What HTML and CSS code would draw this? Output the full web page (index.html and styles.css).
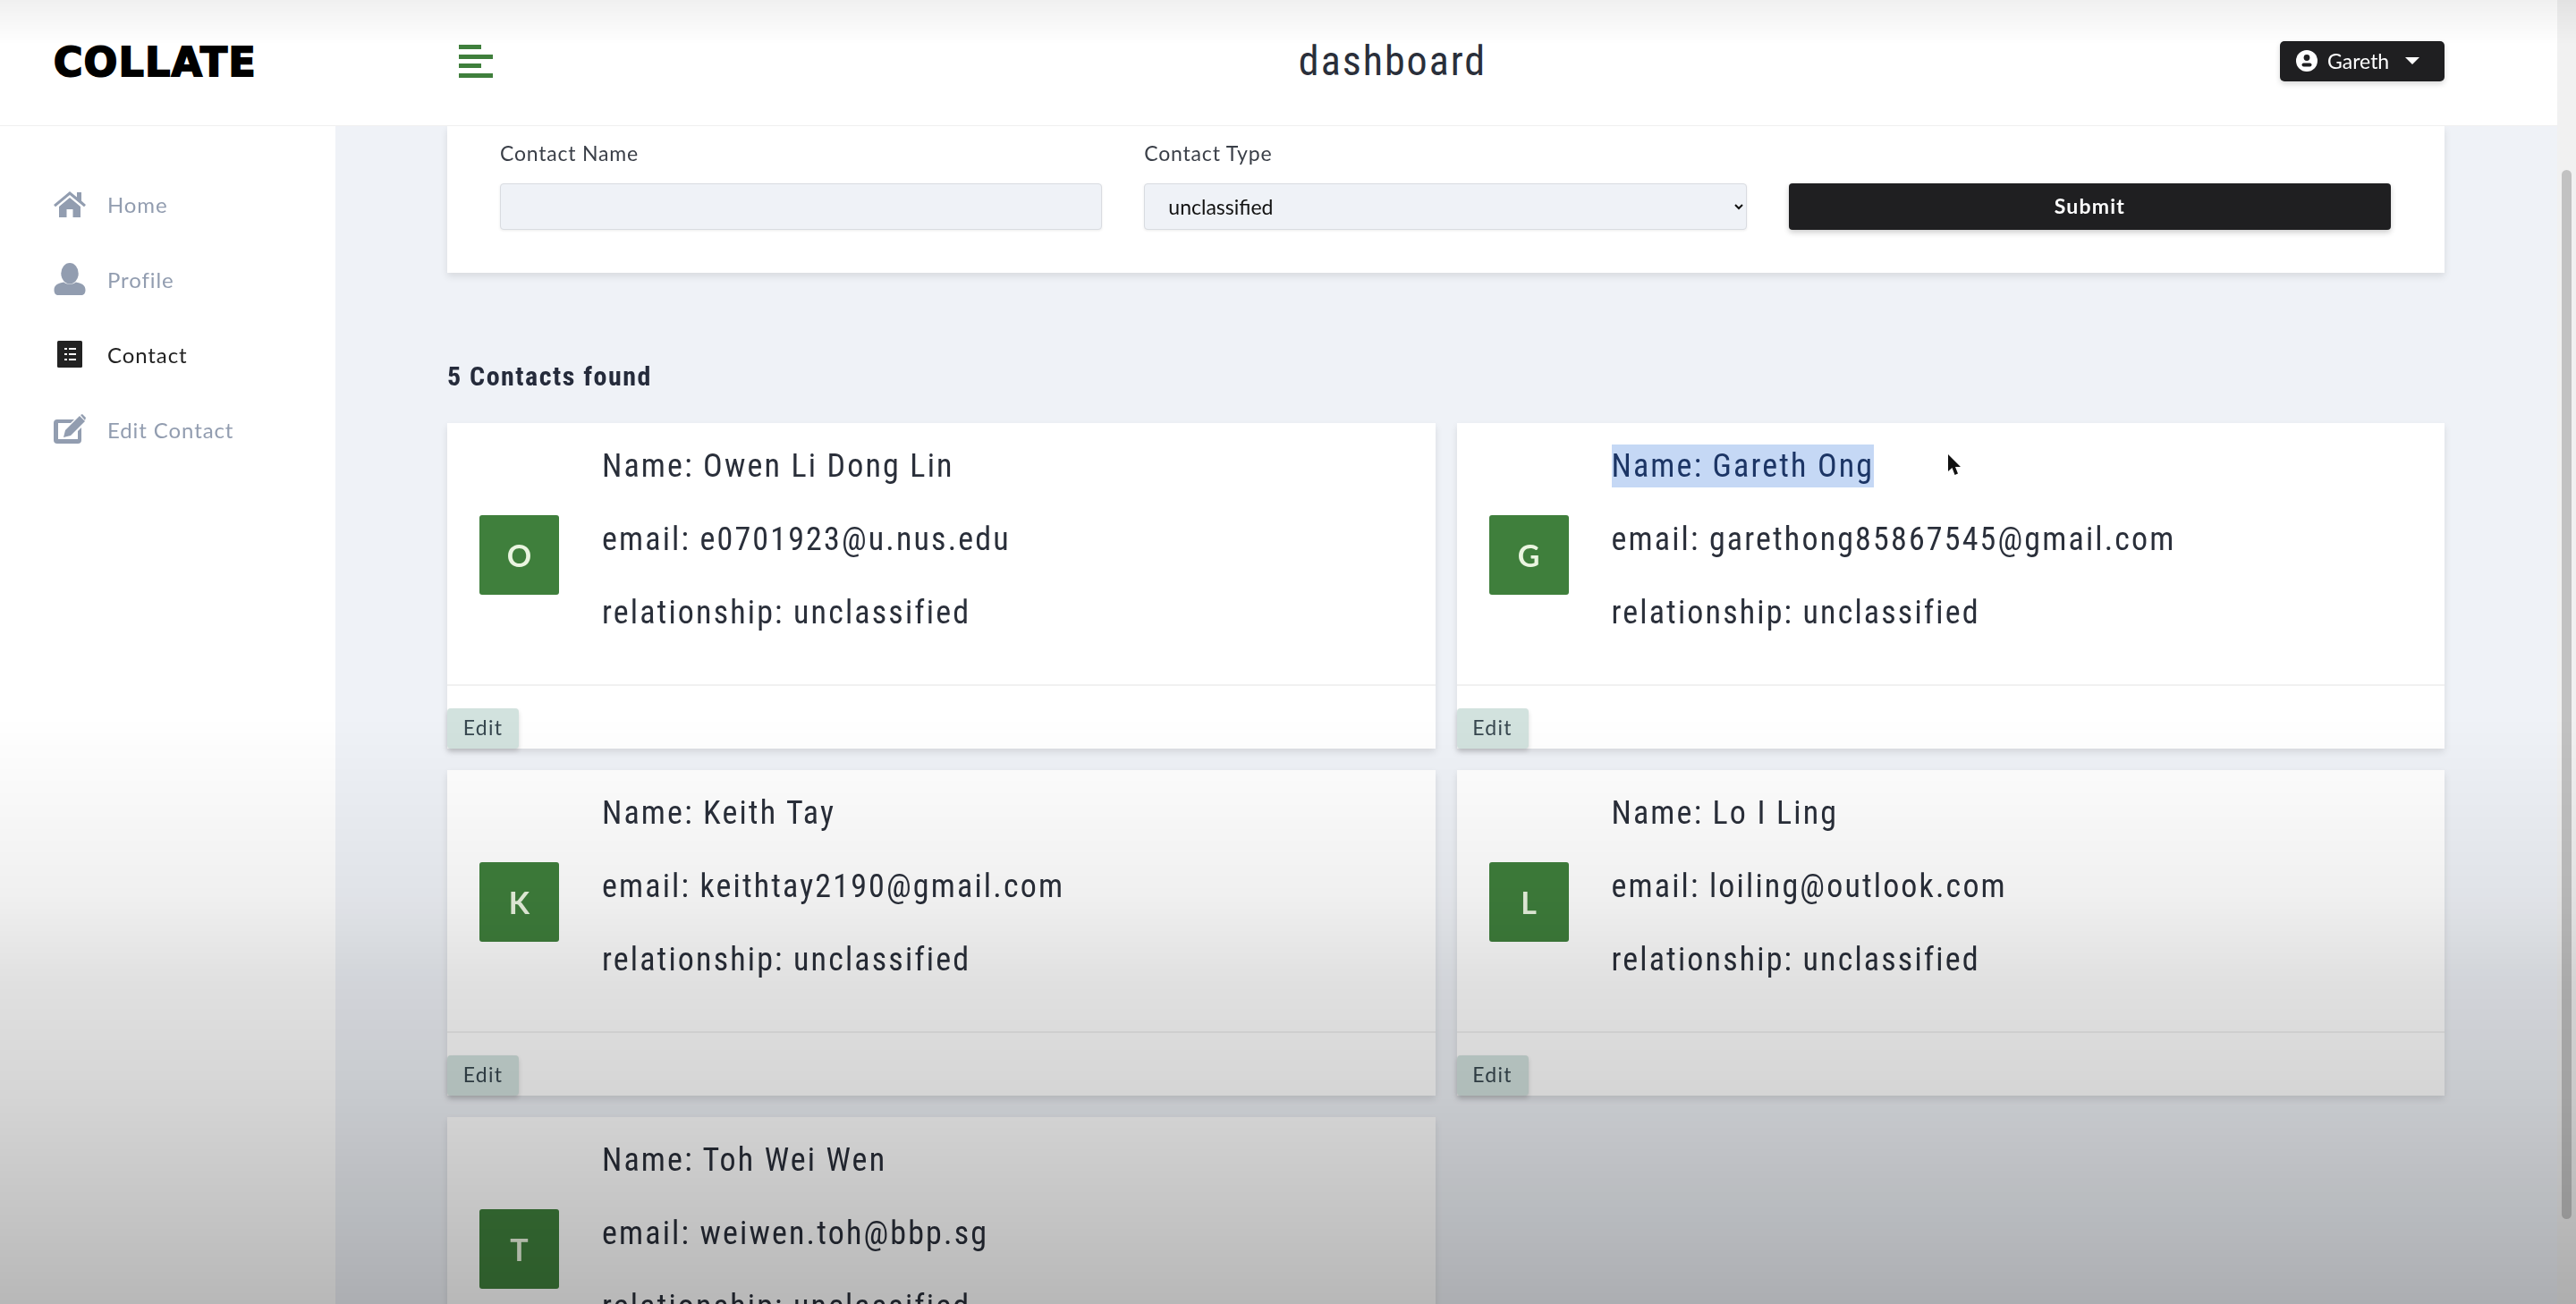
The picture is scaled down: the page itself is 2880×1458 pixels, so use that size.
FILE: index.html
```html
<!DOCTYPE html>
<html lang="en">
<head>
    <meta charset="UTF-8" />
    <title>Collate dashboard</title>
    <link rel="stylesheet" href="styles.css">
</head>
<body>
<div class="app">
    <div class="page">
        <header class="topbar">
            <div class="brand">COLLATE</div>
            <svg class="toggle" viewBox="0 0 38 37">
                <rect x="0" y="0" width="25" height="5"/>
                <rect x="0" y="11" width="38" height="5"/>
                <rect x="0" y="21" width="25" height="5"/>
                <rect x="0" y="32" width="38" height="5"/>
            </svg>
            <h1 class="title">dashboard</h1>
            <button class="user-btn">
                <svg class="user-icon" viewBox="0 0 24 24">
                    <circle cx="12" cy="12" r="12" fill="#fff"/>
                    <circle cx="12" cy="8.5" r="3.4" fill="#1f1f21"/>
                    <rect x="6.5" y="14.5" width="11" height="4" rx="2" fill="#1f1f21"/>
                </svg>
                <span>Gareth</span>
                <i class="caret"></i>
            </button>
        </header>

        <div class="content">
            <aside class="sidebar">
                <a class="nav-item">
                    <svg class="nav-icon" viewBox="0 0 36 30">
                        <path d="M0 16 18 1l8 6.500V2h5v9.600l5 4.400-2 2.200L18 5 2 18.200z"/>
                        <path d="M6 18 18 8l12 10v12h-8.500V21h-7v9H6z"/>
                    </svg>
                    <span>Home</span>
                </a>
                <a class="nav-item">
                    <svg class="nav-icon" viewBox="0 0 36 37">
                        <ellipse cx="18" cy="12" rx="10" ry="12"/>
                        <path d="M0 31c0-6 5-8 11-9 4 3 10 3 14 0 6 1 11 3 11 9 0 4-2 6-5 6H5c-3 0-5-2-5-6z"/>
                    </svg>
                    <span>Profile</span>
                </a>
                <a class="nav-item active">
                    <svg class="nav-icon" viewBox="0 0 36 30">
                        <rect x="4" y="0" width="28" height="30" rx="1.500"/>
                        <path fill="#fff" d="M12 8h3v2h-3zM17 8h8v2h-8zM12 14h3v2h-3zM17 14h8v2h-8zM12 20h3v2h-3zM17 20h8v2h-8z"/>
                    </svg>
                    <span>Contact</span>
                </a>
                <a class="nav-item">
                    <svg class="nav-icon" viewBox="0 0 36 32">
                        <path d="M4 5h19l-4 4H5v18h22V18l4-4v14a4 4 0 0 1-4 4H4a4 4 0 0 1-4-4V9a4 4 0 0 1 4-4z"/>
                        <path d="M29 1l6 6-16 16-8 2 2-8zM30 0l2-1 4 4-1 3z"/>
                    </svg>
                    <span>Edit Contact</span>
                </a>
            </aside>

            <main class="main">
                <form class="filter-card">
                    <div class="field">
                        <label for="contact-name">Contact Name</label>
                        <input id="contact-name" type="text" />
                    </div>
                    <div class="field">
                        <label for="contact-type">Contact Type</label>
                        <select id="contact-type">
                            <option>unclassified</option>
                        </select>
                    </div>
                    <div class="field field-submit">
                        <button class="submit-btn" type="button">Submit</button>
                    </div>
                </form>

                <h2 class="found">5 Contacts found</h2>

                <div class="contact-grid">
                    <article class="contact-card">
                        <div class="contact-body">
                            <div class="avatar">O</div>
                            <div class="contact-lines">
                                <p>Name: Owen Li Dong Lin</p>
                                <p>email: e0701923@u.nus.edu</p>
                                <p>relationship: unclassified</p>
                            </div>
                        </div>
                        <div class="contact-foot"><button class="edit-btn">Edit</button></div>
                    </article>
                    <article class="contact-card">
                        <div class="contact-body">
                            <div class="avatar">G</div>
                            <div class="contact-lines">
                                <p><span class="selected">Name: Gareth Ong</span></p>
                                <p>email: garethong85867545@gmail.com</p>
                                <p>relationship: unclassified</p>
                            </div>
                        </div>
                        <div class="contact-foot"><button class="edit-btn">Edit</button></div>
                        <svg class="pointer" viewBox="0 0 14 24">
                            <path d="M0 0v19l4.500-4 3 8 3.500-1.500-3-7.500H14z"/>
                        </svg>
                    </article>
                    <article class="contact-card">
                        <div class="contact-body">
                            <div class="avatar">K</div>
                            <div class="contact-lines">
                                <p>Name: Keith Tay</p>
                                <p>email: keithtay2190@gmail.com</p>
                                <p>relationship: unclassified</p>
                            </div>
                        </div>
                        <div class="contact-foot"><button class="edit-btn">Edit</button></div>
                    </article>
                    <article class="contact-card">
                        <div class="contact-body">
                            <div class="avatar">L</div>
                            <div class="contact-lines">
                                <p>Name: Lo I Ling</p>
                                <p>email: loiling@outlook.com</p>
                                <p>relationship: unclassified</p>
                            </div>
                        </div>
                        <div class="contact-foot"><button class="edit-btn">Edit</button></div>
                    </article>
                    <article class="contact-card">
                        <div class="contact-body">
                            <div class="avatar">T</div>
                            <div class="contact-lines">
                                <p>Name: Toh Wei Wen</p>
                                <p>email: weiwen.toh@bbp.sg</p>
                                <p>relationship: unclassified</p>
                            </div>
                        </div>
                        <div class="contact-foot"><button class="edit-btn">Edit</button></div>
                    </article>
                </div>
            </main>
        </div>
    </div>

    <div class="scrollbar"><div class="scrollbar-thumb"></div></div>
</div>
<div class="shade"></div>
</body>
</html>
```

FILE: styles.css
```css
* {
    box-sizing: border-box;
}
html, body {
    height: 100%;
}
body {
    margin: 0;
    overflow: hidden;
    font-family: Lato, "Liberation Sans", sans-serif;
    color: #2a2f3a;
    background: #fff;
}
.app {
    display: flex;
    height: 100vh;
    filter: blur(0.6px);
}
.page {
    flex: 1;
    display: flex;
    flex-direction: column;
    min-width: 0;
}

/* top bar */
.topbar {
    flex: none;
    height: 141px;
    display: flex;
    align-items: center;
    padding: 0 126px 4px 60px;
    background: #fff;
    border-bottom: 1px solid #f0f0f0;
}
.brand {
    width: 453px;
    padding-top: 3px;
    font-family: "DejaVu Sans", sans-serif;
    font-weight: 700;
    font-size: 44px;
    line-height: 1;
    letter-spacing: 1.5px;
    color: #000;
    -webkit-text-stroke: 2px #000;
}
.toggle {
    width: 38px;
    height: 37px;
    fill: #3f7f3c;
}
.title {
    flex: 1;
    margin: 0;
    padding-left: 14px;
    text-align: center;
    font-family: Roboto, sans-serif;
    font-stretch: 75%;
    font-weight: 400;
    font-size: 46px;
    letter-spacing: 2px;
    color: #2a2f3a;
}
.user-btn {
    width: 184px;
    height: 45px;
    display: flex;
    align-items: center;
    padding: 0 0 0 18px;
    border: none;
    border-radius: 5px;
    background: #1f1f21;
    color: #fff;
    font-family: inherit;
    font-size: 23px;
    box-shadow: 0 3px 6px rgba(0, 0, 0, 0.15);
}
.user-icon {
    width: 24px;
    height: 24px;
    margin-right: 11px;
}
.caret {
    margin-left: 18px;
    border-top: 8px solid #fff;
    border-left: 8px solid transparent;
    border-right: 8px solid transparent;
}

.content {
    flex: 1;
    display: flex;
    min-height: 0;
}

/* sidebar */
.sidebar {
    flex: none;
    width: 375px;
    padding: 67px 0 0 60px;
    background: #fff;
    display: flex;
    flex-direction: column;
    gap: 44px;
}
.nav-item {
    height: 40px;
    display: flex;
    align-items: center;
    gap: 24px;
    font-size: 24px;
    letter-spacing: 0.9px;
    color: #929db0;
}
.nav-item.active {
    color: #222;
}
.nav-icon {
    width: 36px;
    height: 36px;
    fill: currentColor;
}

/* main column */
.main {
    flex: 1;
    min-width: 0;
    padding: 0 126px 0 125px;
    background: #eff2f7;
    overflow: hidden;
}
.filter-card {
    display: grid;
    grid-template-columns: repeat(3, 1fr);
    gap: 47px;
    padding: 15px 60px 48px 59px;
    background: #fff;
    box-shadow: 0 4px 8px rgba(0, 0, 0, 0.1);
}
.field label {
    display: block;
    height: 30px;
    line-height: 30px;
    margin-bottom: 19px;
    font-size: 23px;
    letter-spacing: 0.8px;
    color: #3a3f48;
}
.field input, .field select, .submit-btn {
    display: block;
    width: 100%;
    height: 52px;
    border-radius: 4px;
    font-family: inherit;
    font-size: 23px;
}
.field input {
    border: 1px solid #d9dce1;
    background: #eff2f7;
    box-shadow: 0 1px 3px rgba(0, 0, 0, 0.08);
}
.field select {
    padding-left: 22px;
    border: 1px solid #d9dce1;
    background: #eff2f7;
    color: #111;
    box-shadow: 0 1px 3px rgba(0, 0, 0, 0.08);
}
.field-submit {
    padding-top: 49px;
}
.submit-btn {
    padding-bottom: 3px;
    border: none;
    background: #1f1f21;
    color: #fff;
    font-weight: 700;
    letter-spacing: 1.2px;
    box-shadow: 0 3px 6px rgba(0, 0, 0, 0.2);
}

.found {
    margin: 96px 0 32px;
    font-family: Roboto, sans-serif;
    font-stretch: 75%;
    font-weight: 700;
    font-size: 30px;
    line-height: 40px;
    letter-spacing: 1.500px;
    color: #252b3b;
}

/* contacts */
.contact-grid {
    display: grid;
    grid-template-columns: 1fr 1fr;
    gap: 24px;
}
.contact-card {
    position: relative;
    height: 364px;
    display: flex;
    flex-direction: column;
    background: #fff;
    box-shadow: 0 4px 8px rgba(0, 0, 0, 0.1);
}
.contact-body {
    flex: none;
    height: 294px;
    display: flex;
    align-items: center;
    padding-left: 36px;
    gap: 48px;
    border-bottom: 2px solid #f1f1f1;
}
.avatar {
    flex: none;
    width: 89px;
    height: 89px;
    margin-top: 2px;
    display: flex;
    align-items: center;
    justify-content: center;
    border-radius: 3px;
    background: #3f7f3c;
    color: #eaf5e0;
    font-size: 34px;
    font-weight: 700;
}
.contact-lines {
    align-self: flex-start;
    padding-top: 24px;
    display: flex;
    flex-direction: column;
    gap: 34px;
}
.contact-lines p {
    margin: 0;
    font-family: Roboto, sans-serif;
    font-stretch: 75%;
    font-size: 36px;
    line-height: 48px;
    letter-spacing: 2.150px;
    color: #2a2f3a;
    white-space: nowrap;
}
.selected {
    display: inline-block;
    background: #c5d8f5;
    color: #1c3565;
}
.contact-foot {
    flex: 1;
    display: flex;
    align-items: flex-end;
}
.edit-btn {
    width: 80px;
    height: 45px;
    padding: 0 0 4px;
    border: none;
    border-radius: 4px;
    background: #d2e2de;
    color: #37474f;
    font-family: inherit;
    font-size: 23px;
    letter-spacing: 1.300px;
    box-shadow: 0 3px 5px rgba(0, 0, 0, 0.15);
}
.pointer {
    position: absolute;
    left: 549px;
    top: 35px;
    width: 14px;
    height: 24px;
    fill: #111;
}

/* scrollbar */
.scrollbar {
    flex: none;
    width: 21px;
    padding: 190px 5px 0 5px;
    background: #f1f1f1;
}
.scrollbar-thumb {
    width: 11px;
    height: 1173px;
    border-radius: 6px;
    background: #c2c2c2;
}

/* the dark fade of the video frame */
.shade {
    position: absolute;
    inset: 0;
    pointer-events: none;
    background: linear-gradient(to bottom,
        rgba(0, 0, 0, 0.06) 0,
        rgba(0, 0, 0, 0) 50px,
        rgba(0, 0, 0, 0) 800px,
        rgba(0, 0, 0, 0.06) 1000px,
        rgba(0, 0, 0, 0.12) 1100px,
        rgba(0, 0, 0, 0.165) 1225px,
        rgba(0, 0, 0, 0.28) 1458px);
}
```
